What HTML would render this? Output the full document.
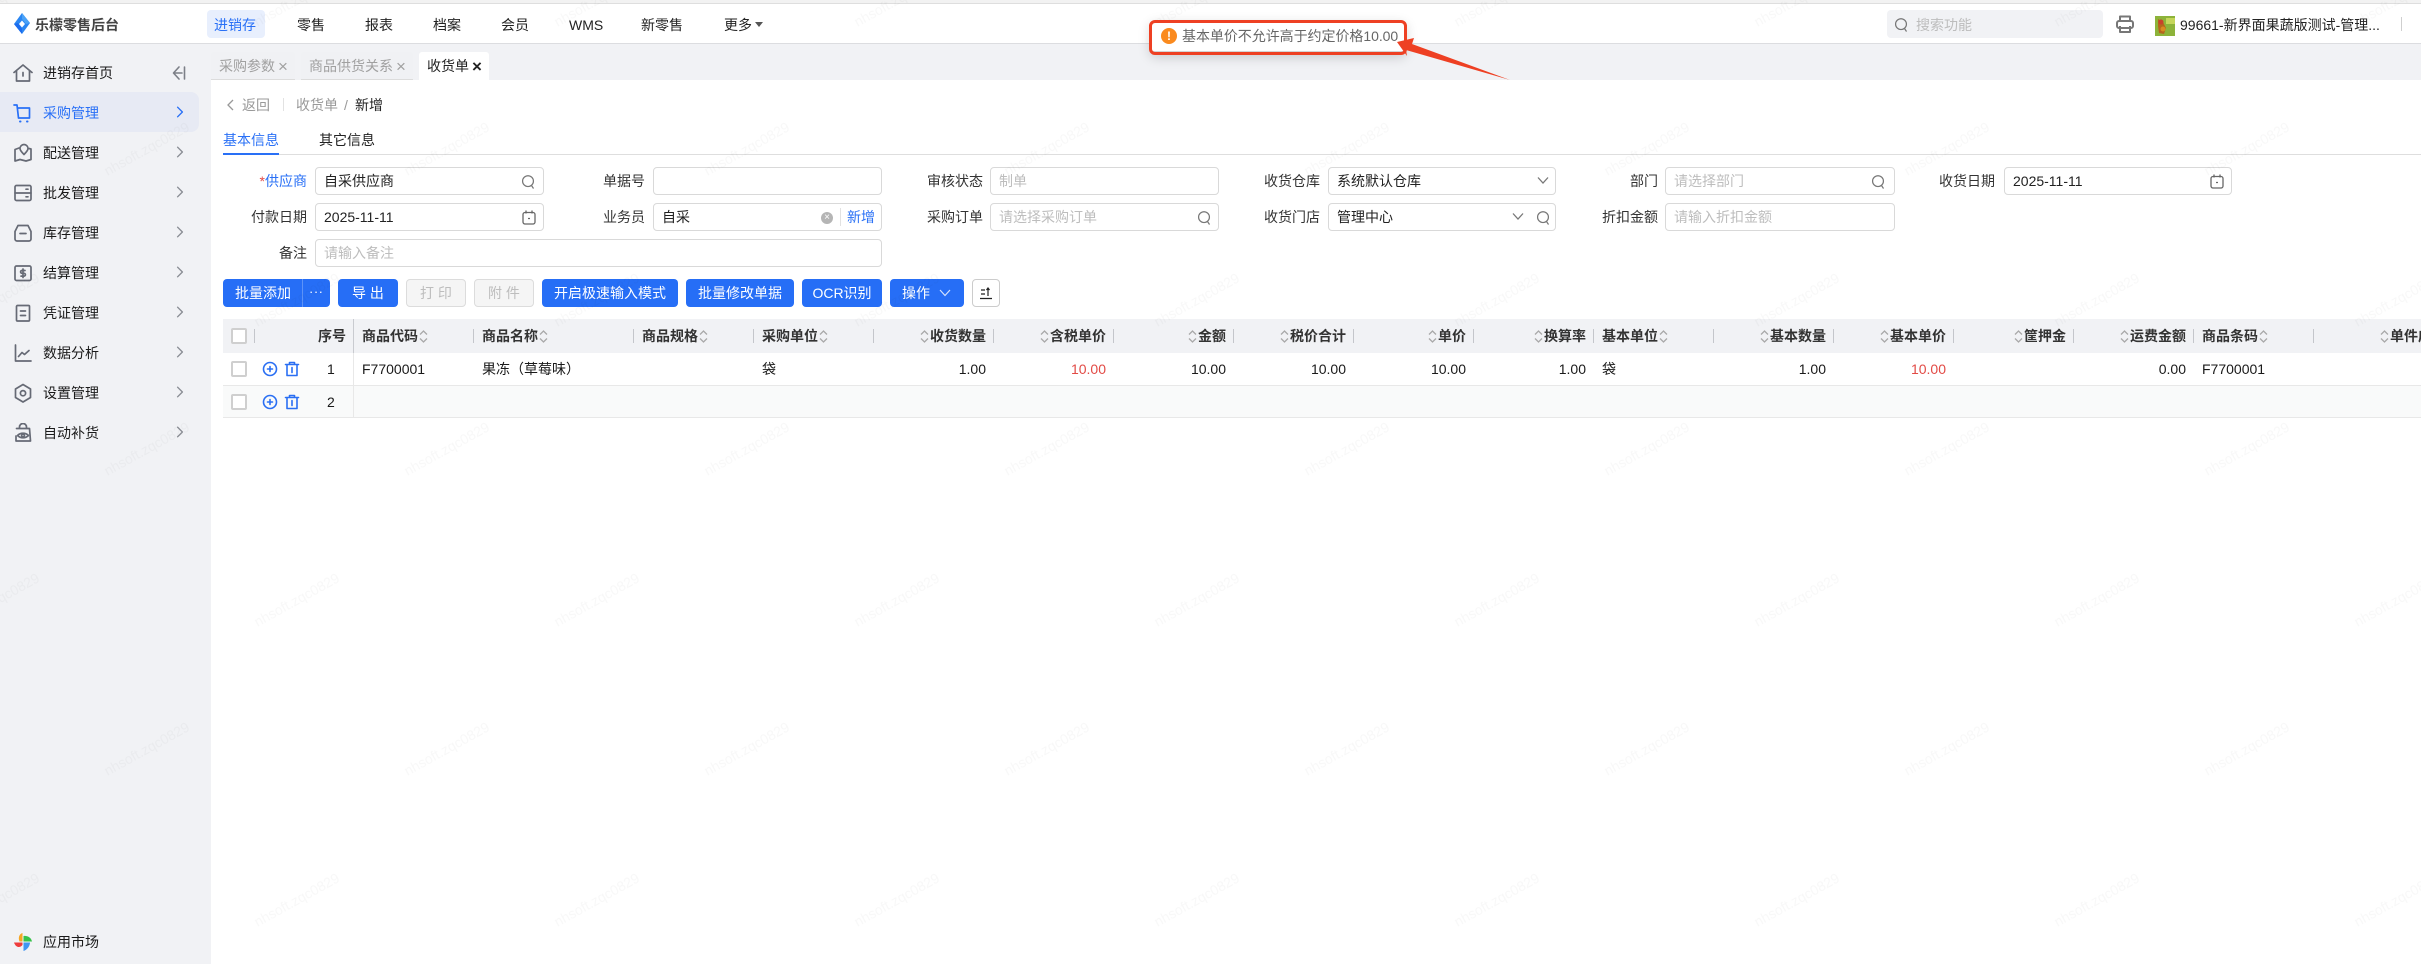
<!DOCTYPE html>
<html lang="zh-CN"><head><meta charset="utf-8"><title>收货单</title>
<style>
*{box-sizing:border-box}
html,body{margin:0;padding:0;width:2421px;height:964px;overflow:hidden;background:#fff}
body{position:relative;font:14px/20px "Liberation Sans","Noto Sans CJK SC",sans-serif;color:#1f1f1f}
.a{position:absolute;white-space:nowrap}
.sd{position:absolute;left:0;top:44px;width:211px;height:920px;background:#f1f2f5}
.mi{left:43px;height:20px;line-height:20px;color:#1a1a1a}
.ic{position:absolute;left:13px;width:20px;height:20px;fill:none;stroke:#666a75;stroke-width:1.7;stroke-linejoin:round;stroke-linecap:round}
.cv{position:absolute;left:176px;width:8px;height:12px;margin-top:1px;fill:none;stroke:#8a8d94;stroke-width:1.7;stroke-linecap:round;stroke-linejoin:round}
.nv{top:15px;height:20px;line-height:20px;color:#222}
.tab{position:absolute;top:52px;height:28px;line-height:28px;padding-left:8px;color:#a0a0a0;background:#f0f1f4;border-bottom:1px solid #dcdcdc;border-radius:3px 3px 0 0}
.tab span{font-size:17px;margin-left:3px;vertical-align:-1px}
.lb{height:28px;line-height:28px;text-align:right;color:#333}
.in{position:absolute;height:28px;border:1px solid #d9d9d9;border-radius:4px;background:#fff;line-height:26px;padding-left:8px;color:#222;white-space:nowrap}
.ph{color:#bdbdbd}
.sv{position:absolute;width:14px;height:16px;margin-top:1px;fill:none;stroke:#777;stroke-width:1.4;stroke-linecap:round;stroke-linejoin:round}
.bt{position:absolute;top:279px;height:28px;line-height:28px;text-align:center;border-radius:4px;background:#266ef6;color:#fff;white-space:nowrap}
.dis{background:#f5f5f5;border:1px solid #dcdcdc;color:#bdbdbd;line-height:26px}
.th{top:326px;height:20px;line-height:20px;font-weight:700;color:#333;display:flex;align-items:center}
.so{width:9px;height:15px;fill:none;stroke:#a8a8a8;stroke-width:1.3;flex:none;margin:0 1px}
.dv{position:absolute;top:329px;width:1px;height:14px;background:#c4c6cb}
.td{top:359px;height:20px;line-height:20px;color:#1a1a1a}
.red{color:#e24a45}
.cb{position:absolute;left:231px;width:16px;height:16px;border:2px solid #cfcfcf;border-radius:2px;background:#fff}
.act{position:absolute;width:16px;height:16px;fill:none;stroke:#2a6ff3;stroke-width:1.6;stroke-linecap:round;stroke-linejoin:round}
</style></head><body>

<div class="a" style="left:0;top:0;width:2421px;height:4px;background:#f2f2f2;border-bottom:1px solid #dedede"></div>
<div class="a" style="left:0;top:43px;width:2421px;height:1px;background:#dcdde0"></div>

<svg class="a" style="left:13px;top:13px" width="18" height="22" viewBox="0 0 18 22"><path d="M9 0 17 10 9 21 1 11Z" fill="#2a86f2"/><path d="M9 0 17 10 13 11 9 6Z" fill="#4aa2f7"/><path d="M9 21 1 11 5 10 9 16Z" fill="#1c6cee"/><path d="M9 7.500 12 11 9 14.500 6 11Z" fill="#fff"/></svg>
<div class="a" style="left:35px;top:15px;font-size:14px;line-height:20px;font-weight:700;color:#444">乐檬零售后台</div>

<div class="a" style="left:207px;top:10px;width:58px;height:28px;background:#e8effd;border-radius:4px"></div>
<div class="a nv" style="left:214px;color:#2970f6">进销存</div>
<div class="a nv" style="left:297px">零售</div>
<div class="a nv" style="left:365px">报表</div>
<div class="a nv" style="left:433px">档案</div>
<div class="a nv" style="left:501px">会员</div>
<div class="a nv" style="left:569px">WMS</div>
<div class="a nv" style="left:641px">新零售</div>
<div class="a nv" style="left:724px">更多</div>
<div class="a" style="left:755px;top:22px;border:4px solid transparent;border-top:5px solid #555;border-bottom:0"></div>

<div class="a" style="left:1887px;top:10px;width:216px;height:28px;background:#f1f2f5;border-radius:4px"></div>
<svg class="sv" style="left:1894px;top:16px" viewBox="0 0 16 18"><circle cx="8" cy="8" r="6.200"/><path d="M12 13 14 16"/></svg>
<div class="a ph" style="left:1916px;top:15px">搜索功能</div>
<svg class="a" style="left:2115px;top:14px" width="20" height="20" viewBox="0 0 20 20" fill="none" stroke="#777" stroke-width="2" stroke-linejoin="round"><path d="M5 7V2.500h10V7"/><rect x="2" y="7" width="16" height="7" rx="2"/><path d="M5 12v6h10v-6"/></svg>
<svg class="a" style="left:2155px;top:16px" width="20" height="20" viewBox="0 0 20 20"><rect width="20" height="20" fill="#8db33a"/><rect x="11" y="2" width="9" height="6" fill="#c5d65a"/><path d="M3 3 8 6 11 12 9 18 4 17 3 10Z" fill="#b5651d"/><circle cx="6" cy="6" r="2.500" fill="#c9412b"/><circle cx="8" cy="13" r="2.500" fill="#d98a20"/></svg>
<div class="a" style="left:2180px;top:15px;color:#222">99661-新界面果蔬版测试-管理...</div>
<div class="a" style="left:2401px;top:17px;width:1px;height:14px;background:#cfcfcf"></div>

<!-- sidebar -->
<div class="sd"></div>
<div class="a" style="left:0;top:92px;width:199px;height:40px;background:#e7eaf4;border-radius:0 8px 8px 0"></div>

<svg class="ic" style="top:63px" viewBox="0 0 20 20"><path d="M1 9.500 10 2l9 7.500M3.500 8v10h13V8M10 9.500v3.500"/></svg>
<div class="a mi" style="top:63px">进销存首页</div>
<svg class="a" style="left:172px;top:65px" width="14" height="16" viewBox="0 0 14 16" fill="none" stroke="#7c7f87" stroke-width="1.6" stroke-linecap="round" stroke-linejoin="round"><path d="M7 2 1.500 8 7 14M1.500 8H10M12.500 2v12"/></svg>

<svg class="ic" style="top:103px;stroke:#2970f6" viewBox="0 0 20 20"><path d="M1 2h3l1.500 13h11V5H5"/><path d="M7 18.500h.5M14 18.500h.5" stroke-width="2"/></svg>
<div class="a mi" style="top:103px;color:#2970f6">采购管理</div>
<svg class="cv" style="top:105px;stroke:#2970f6" viewBox="0 0 10 14"><path d="M2 1 8 7 2 13"/></svg>

<svg class="ic" style="top:143px" viewBox="0 0 20 20"><path d="M6 5 2 6.500V18l5-1.500 6 1.500 5-1.500V6l-2-.5"/><path d="M11 1.500a4 4 0 0 1 4 4c0 2-4 6-4 6s-4-4-4-6a4 4 0 0 1 4-4Z"/></svg>
<div class="a mi" style="top:143px">配送管理</div>
<svg class="cv" style="top:145px" viewBox="0 0 10 14"><path d="M2 1 8 7 2 13"/></svg>

<svg class="ic" style="top:183px" viewBox="0 0 20 20"><rect x="2" y="2.500" width="16" height="15" rx="1.500"/><path d="M2 10h16M13 6.200h2M13 13.800h2"/></svg>
<div class="a mi" style="top:183px">批发管理</div>
<svg class="cv" style="top:185px" viewBox="0 0 10 14"><path d="M2 1 8 7 2 13"/></svg>

<svg class="ic" style="top:223px" viewBox="0 0 20 20"><path d="M5 2.500h10l3 6V16a2 2 0 0 1-2 2H4a2 2 0 0 1-2-2V8.500Z"/><path d="M7 10.500h6"/></svg>
<div class="a mi" style="top:223px">库存管理</div>
<svg class="cv" style="top:225px" viewBox="0 0 10 14"><path d="M2 1 8 7 2 13"/></svg>

<svg class="ic" style="top:263px" viewBox="0 0 20 20"><rect x="2" y="3" width="16" height="14.500" rx="1.500"/><path d="M12 7.500H9a1.400 1.400 0 0 0 0 2.800h2a1.400 1.400 0 0 1 0 2.800H8M10 6v8.500"/></svg>
<div class="a mi" style="top:263px">结算管理</div>
<svg class="cv" style="top:265px" viewBox="0 0 10 14"><path d="M2 1 8 7 2 13"/></svg>

<svg class="ic" style="top:303px" viewBox="0 0 20 20"><rect x="3.500" y="2.500" width="13" height="15.500" rx="1"/><path d="M7.500 8h5M7.500 12.500h5"/></svg>
<div class="a mi" style="top:303px">凭证管理</div>
<svg class="cv" style="top:305px" viewBox="0 0 10 14"><path d="M2 1 8 7 2 13"/></svg>

<svg class="ic" style="top:343px" viewBox="0 0 20 20"><path d="M2.500 2v16H18M5.500 13.500 9 9.500l2.500 2L16 7.500"/></svg>
<div class="a mi" style="top:343px">数据分析</div>
<svg class="cv" style="top:345px" viewBox="0 0 10 14"><path d="M2 1 8 7 2 13"/></svg>

<svg class="ic" style="top:383px" viewBox="0 0 20 20"><path d="M10 1.500 17.500 6v8.500L10 19l-7.500-4.500V6Z"/><circle cx="10" cy="10.200" r="2.600"/></svg>
<div class="a mi" style="top:383px">设置管理</div>
<svg class="cv" style="top:385px" viewBox="0 0 10 14"><path d="M2 1 8 7 2 13"/></svg>

<svg class="ic" style="top:423px" viewBox="0 0 20 20"><path d="M6.500 5.500V4a3.500 3.500 0 0 1 7 0v1.500M3.500 5.500h13l1 12.500H3L3 13"/><path d="M4.500 12.500c3-3 8-3 11 0-3 3-8 3-11 0Z"/><circle cx="10" cy="12.500" r="1.400"/></svg>
<div class="a mi" style="top:423px">自动补货</div>
<svg class="cv" style="top:425px" viewBox="0 0 10 14"><path d="M2 1 8 7 2 13"/></svg>

<svg class="a" style="left:14px;top:933px" width="18" height="18" viewBox="0 0 18 18"><path d="M8.500 0C5 1 4 5 5.500 8.500H8.500Z" fill="#f5a623"/><path d="M9.500 8.500 9.500 3C13 2.500 17 4 18 8.500Z" fill="#37c24a"/><path d="M0 9.500H8.500V12C6 15 2 15 0 9.500Z" fill="#ee3c3c"/><path d="M9.500 9.500H16C16 13 13 17 9.500 18Z" fill="#3f96f2"/></svg>
<div class="a mi" style="top:932px">应用市场</div>

<!-- tabs strip -->
<div class="a" style="left:211px;top:44px;width:2210px;height:36px;background:#f1f2f5"></div>
<div class="tab" style="left:211px;width:84px">采购参数<span>×</span></div>
<div class="tab" style="left:301px;width:112px">商品供货关系<span>×</span></div>
<div class="tab" style="left:419px;width:70px;background:#fff;border:0;color:#222">收货单<span style="font-weight:700">×</span></div>

<!-- breadcrumb -->
<svg class="a" style="left:226px;top:99px" width="9" height="12" viewBox="0 0 9 12" fill="none" stroke="#999" stroke-width="1.300"><path d="M7 1 2 6l5 5"/></svg>
<div class="a" style="left:242px;top:95px;color:#999">返回</div>
<div class="a" style="left:283px;top:98px;width:1px;height:13px;background:#e2e2e2"></div>
<div class="a" style="left:296px;top:95px;color:#999">收货单</div>
<div class="a" style="left:344px;top:95px;color:#999">/</div>
<div class="a" style="left:355px;top:95px;color:#222">新增</div>

<div class="a" style="left:223px;top:130px;color:#2970f6">基本信息</div>
<div class="a" style="left:319px;top:130px;color:#222">其它信息</div>
<div class="a" style="left:223px;top:154px;width:2198px;height:1px;background:#dedede"></div>
<div class="a" style="left:223px;top:153px;width:56px;height:2px;background:#2970f6"></div>

<!-- form -->
<div class="a lb" style="left:250px;width:57px;top:167px"><span style="color:#e24a45">*</span><span style="color:#2970f6">供应商</span></div>
<div class="in" style="left:315px;top:167px;width:229px">自采供应商</div>
<svg class="sv" style="left:521px;top:173px" viewBox="0 0 16 18"><circle cx="8" cy="8" r="6.200"/><path d="M12 13 14 16"/></svg>
<div class="a lb" style="left:560px;width:85px;top:167px">单据号</div>
<div class="in" style="left:653px;top:167px;width:229px"></div>
<div class="a lb" style="left:900px;width:83px;top:167px">审核状态</div>
<div class="in ph" style="left:990px;top:167px;width:229px">制单</div>
<div class="a lb" style="left:1240px;width:80px;top:167px">收货仓库</div>
<div class="in" style="left:1328px;top:167px;width:228px">系统默认仓库</div>
<svg class="a" style="left:1537px;top:176px" width="12" height="9" viewBox="0 0 12 9" fill="none" stroke="#777" stroke-width="1.300"><path d="M1 1.500 6 7l5-5.500"/></svg>
<div class="a lb" style="left:1600px;width:58px;top:167px">部门</div>
<div class="in ph" style="left:1665px;top:167px;width:230px">请选择部门</div>
<svg class="sv" style="left:1871px;top:173px" viewBox="0 0 16 18"><circle cx="8" cy="8" r="6.200"/><path d="M12 13 14 16"/></svg>
<div class="a lb" style="left:1915px;width:80px;top:167px">收货日期</div>
<div class="in" style="left:2004px;top:167px;width:228px">2025-11-11</div>
<svg class="a" style="left:2210px;top:174px" width="14" height="15" viewBox="0 0 14 15" fill="none" stroke="#666" stroke-width="1.300"><rect x="1" y="2.500" width="12" height="11.500" rx="2"/><path d="M4 .5v3M10 .5v3M6 8.500h2"/></svg>

<div class="a lb" style="left:230px;width:77px;top:203px">付款日期</div>
<div class="in" style="left:315px;top:203px;width:229px">2025-11-11</div>
<svg class="a" style="left:522px;top:210px" width="14" height="15" viewBox="0 0 14 15" fill="none" stroke="#666" stroke-width="1.300"><rect x="1" y="2.500" width="12" height="11.500" rx="2"/><path d="M4 .5v3M10 .5v3M6 8.500h2"/></svg>
<div class="a lb" style="left:560px;width:85px;top:203px">业务员</div>
<div class="in" style="left:653px;top:203px;width:229px">自采</div>
<div class="a" style="left:821px;top:212px;width:12px;height:12px;border-radius:50%;background:#b5b5b5;color:#fff;font-size:10px;line-height:12px;text-align:center">×</div>
<div class="a" style="left:840px;top:208px;width:1px;height:18px;background:#e2e2e2"></div>
<div class="a" style="left:847px;top:207px;color:#2970f6">新增</div>
<div class="a lb" style="left:900px;width:83px;top:203px">采购订单</div>
<div class="in ph" style="left:990px;top:203px;width:229px">请选择采购订单</div>
<svg class="sv" style="left:1197px;top:209px" viewBox="0 0 16 18"><circle cx="8" cy="8" r="6.200"/><path d="M12 13 14 16"/></svg>
<div class="a lb" style="left:1240px;width:80px;top:203px">收货门店</div>
<div class="in" style="left:1328px;top:203px;width:228px">管理中心</div>
<svg class="a" style="left:1512px;top:212px" width="12" height="9" viewBox="0 0 12 9" fill="none" stroke="#777" stroke-width="1.300"><path d="M1 1.500 6 7l5-5.500"/></svg>
<svg class="sv" style="left:1536px;top:209px" viewBox="0 0 16 18"><circle cx="8" cy="8" r="6.200"/><path d="M12 13 14 16"/></svg>
<div class="a lb" style="left:1600px;width:58px;top:203px">折扣金额</div>
<div class="in ph" style="left:1665px;top:203px;width:230px">请输入折扣金额</div>

<div class="a lb" style="left:250px;width:57px;top:239px">备注</div>
<div class="in ph" style="left:315px;top:239px;width:567px">请输入备注</div>

<!-- toolbar -->
<div class="bt" style="left:223px;width:107px;text-align:left;padding-left:12px">批量添加</div>
<div class="a" style="left:302px;top:279px;width:1px;height:28px;background:#5d93f8"></div>
<div class="a" style="left:309px;top:279px;color:#fff;line-height:26px;font-size:13px;letter-spacing:.5px">···</div>
<div class="bt" style="left:338px;width:60px">导 出</div>
<div class="bt dis" style="left:406px;width:60px">打 印</div>
<div class="bt dis" style="left:474px;width:60px">附 件</div>
<div class="bt" style="left:542px;width:136px">开启极速输入模式</div>
<div class="bt" style="left:686px;width:108px">批量修改单据</div>
<div class="bt" style="left:802px;width:80px">OCR识别</div>
<div class="bt" style="left:890px;width:74px;text-align:left;padding-left:12px">操作</div>
<svg class="a" style="left:939px;top:289px" width="12" height="8" viewBox="0 0 12 8" fill="none" stroke="#fff" stroke-width="1.200" opacity=".8"><path d="M1 1 6 6.500 11 1"/></svg>
<div class="a" style="left:972px;top:279px;width:28px;height:28px;border:1px solid #ccc;border-radius:4px;background:#fff"></div>
<svg class="a" style="left:979px;top:286px" width="14" height="14" viewBox="0 0 14 14" fill="none" stroke="#222" stroke-width="1.200"><path d="M2 4h4M2 8h4M9 2v8M7.500 4 9 2l1.500 2M1 12.500h12"/></svg>

<!-- table -->
<div class="a" style="left:223px;top:319px;width:2198px;height:34px;background:#f1f2f5"></div>
<div class="a" style="left:223px;top:385px;width:2198px;height:1px;background:#e8e8e8"></div>
<div class="a" style="left:223px;top:386px;width:2198px;height:32px;background:#f9fafa;border-bottom:1px solid #e8e8e8"></div>
<div class="a" style="left:353px;top:319px;width:1px;height:34px;background:#c9cbd0"></div>
<div class="a" style="left:353px;top:353px;width:1px;height:65px;background:#e8e8e8"></div>

<div class="cb" style="top:328px"></div><div class="dv" style="left:254px"></div>
<div class="cb" style="top:361px"></div><div class="cb" style="top:394px"></div>
<svg class="act" style="left:262px;top:361px" viewBox="0 0 16 16"><circle cx="8" cy="8" r="6.500"/><path d="M5.500 8h5M8 5.500v5"/></svg>
<svg class="act" style="left:284px;top:361px" viewBox="0 0 16 16"><path d="M1.500 3.500h13M5.500 3.500V1.500h5v2M3 3.500v11h10v-11M8 6.500v5"/></svg>
<svg class="act" style="left:262px;top:394px" viewBox="0 0 16 16"><circle cx="8" cy="8" r="6.500"/><path d="M5.500 8h5M8 5.500v5"/></svg>
<svg class="act" style="left:284px;top:394px" viewBox="0 0 16 16"><path d="M1.500 3.500h13M5.500 3.500V1.500h5v2M3 3.500v11h10v-11M8 6.500v5"/></svg>

<div class="a th" style="left:318px">序号</div>

<svg width="0" height="0" style="position:absolute"><symbol id="s" viewBox="0 0 9 15"><path d="M1 5.500 4.500 2 8 5.500M1 9.500 4.500 13 8 9.500"/></symbol></svg>

<div class="a th" style="left:362px">商品代码<svg class="so"><use href="#s"/></svg></div><div class="dv" style="left:473px"></div>
<div class="a th" style="left:482px">商品名称<svg class="so"><use href="#s"/></svg></div><div class="dv" style="left:633px"></div>
<div class="a th" style="left:642px">商品规格<svg class="so"><use href="#s"/></svg></div><div class="dv" style="left:753px"></div>
<div class="a th" style="left:762px">采购单位<svg class="so"><use href="#s"/></svg></div><div class="dv" style="left:873px"></div>
<div class="a th" style="right:1435px"><svg class="so"><use href="#s"/></svg>收货数量</div><div class="dv" style="left:993px"></div>
<div class="a th" style="right:1315px"><svg class="so"><use href="#s"/></svg>含税单价</div><div class="dv" style="left:1113px"></div>
<div class="a th" style="right:1195px"><svg class="so"><use href="#s"/></svg>金额</div><div class="dv" style="left:1233px"></div>
<div class="a th" style="right:1075px"><svg class="so"><use href="#s"/></svg>税价合计</div><div class="dv" style="left:1353px"></div>
<div class="a th" style="right:955px"><svg class="so"><use href="#s"/></svg>单价</div><div class="dv" style="left:1473px"></div>
<div class="a th" style="right:835px"><svg class="so"><use href="#s"/></svg>换算率</div><div class="dv" style="left:1593px"></div>
<div class="a th" style="left:1602px">基本单位<svg class="so"><use href="#s"/></svg></div><div class="dv" style="left:1713px"></div>
<div class="a th" style="right:595px"><svg class="so"><use href="#s"/></svg>基本数量</div><div class="dv" style="left:1833px"></div>
<div class="a th" style="right:475px"><svg class="so"><use href="#s"/></svg>基本单价</div><div class="dv" style="left:1953px"></div>
<div class="a th" style="right:355px"><svg class="so"><use href="#s"/></svg>筐押金</div><div class="dv" style="left:2073px"></div>
<div class="a th" style="right:235px"><svg class="so"><use href="#s"/></svg>运费金额</div><div class="dv" style="left:2193px"></div>
<div class="a th" style="left:2202px">商品条码<svg class="so"><use href="#s"/></svg></div><div class="dv" style="left:2313px"></div>
<div class="a th" style="left:2379px"><svg class="so"><use href="#s"/></svg>单件成本</div>

<div class="a td" style="left:327px">1</div>
<div class="a td" style="left:327px;top:392px">2</div>
<div class="a td" style="left:362px">F7700001</div>
<div class="a td" style="left:482px">果冻（草莓味）</div>
<div class="a td" style="left:762px">袋</div>
<div class="a td" style="right:1435px">1.00</div>
<div class="a td red" style="right:1315px">10.00</div>
<div class="a td" style="right:1195px">10.00</div>
<div class="a td" style="right:1075px">10.00</div>
<div class="a td" style="right:955px">10.00</div>
<div class="a td" style="right:835px">1.00</div>
<div class="a td" style="left:1602px">袋</div>
<div class="a td" style="right:595px">1.00</div>
<div class="a td red" style="right:475px">10.00</div>
<div class="a td" style="right:235px">0.00</div>
<div class="a td" style="left:2202px">F7700001</div>

<!-- watermark -->
<svg class="a" style="left:0;top:0;pointer-events:none" width="2421" height="964">
<defs><pattern id="wm" width="300" height="300" patternUnits="userSpaceOnUse">
<g font-family="Liberation Sans" font-size="14" fill="#000" fill-opacity=".028" text-anchor="middle">
<text transform="translate(149 153) rotate(-29)">nhsoft.zqc0829</text>
<text transform="translate(-1 4) rotate(-29)">nhsoft.zqc0829</text>
<text transform="translate(299 4) rotate(-29)">nhsoft.zqc0829</text>
<text transform="translate(-1 304) rotate(-29)">nhsoft.zqc0829</text>
<text transform="translate(299 304) rotate(-29)">nhsoft.zqc0829</text>
</g></pattern></defs>
<rect width="2421" height="964" fill="url(#wm)"/>
</svg>

<!-- toast + annotation -->
<div class="a" style="left:1150px;top:21px;width:256px;height:33px;background:#fff;border-radius:5px;box-shadow:0 3px 12px rgba(0,0,0,.18);border-bottom:3px solid #d4d4d4"></div>
<div class="a" style="left:1161px;top:28px;width:16px;height:16px;border-radius:50%;background:#fa8a1e;color:#fff;font-weight:700;font-size:12px;line-height:16px;text-align:center">!</div>
<div class="a" style="left:1182px;top:26px;color:#666;letter-spacing:-.05px">基本单价不允许高于约定价格10.00</div>
<div class="a" style="left:1149px;top:20px;width:258px;height:35px;border:3.500px solid #ee4023;border-radius:6px"></div>
<svg class="a" style="left:1380px;top:30px" width="140" height="60" viewBox="0 0 140 60"><path d="M17 12 34 8 32 14 130 50 26 20 27 26Z" fill="#ee4023"/></svg>

</body></html>
